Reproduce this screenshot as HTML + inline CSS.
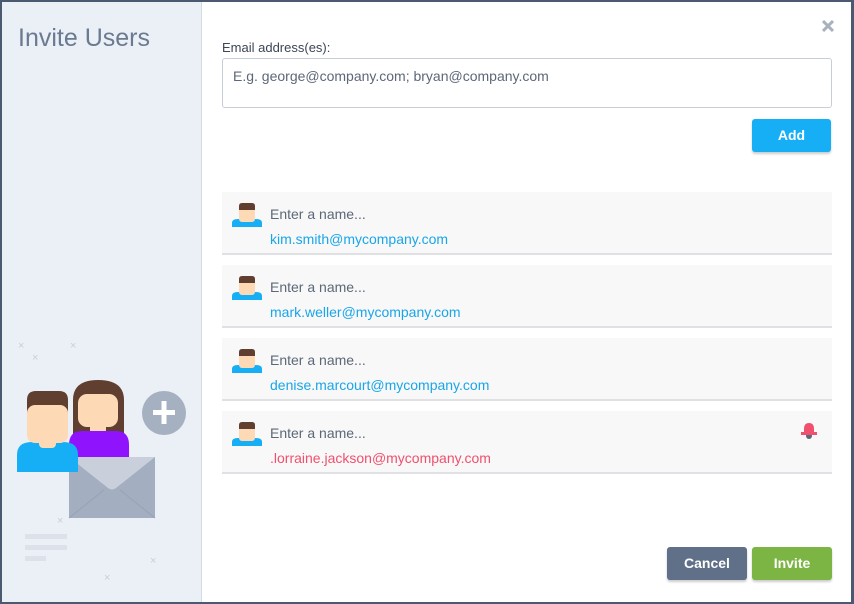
<!DOCTYPE html>
<html><head><style>
*{margin:0;padding:0;box-sizing:border-box}
body{width:854px;height:604px;background:#4b5a70;font-family:"Liberation Sans",sans-serif;position:relative;overflow:hidden}
#left{position:absolute;left:2px;top:2px;width:200px;height:600px;background:#ebeff6;border-right:1px solid #d5dbe5}
#right{position:absolute;left:202px;top:2px;width:649px;height:600px;background:#fff}
h1{position:absolute;left:16px;top:22px;font-weight:normal;font-size:25px;color:#6a7a90}
.lbl{position:absolute;left:20px;top:38px;font-size:13px;color:#3c4656}
.inp{position:absolute;left:20px;top:56px;width:610px;height:50px;border:1px solid #c8ced7;border-radius:3px;font-size:14px;color:#5c6878;padding:9px 10px}
.btn{position:absolute;border-radius:3px;color:#fff;font-weight:bold;font-size:14px;text-align:center;box-shadow:0 2px 2px rgba(0,0,0,.2)}
.row{position:absolute;left:20px;width:610px;height:63px;background:#f8f8f8;border-bottom:2px solid #dfe1e4}
.row .n{position:absolute;left:48px;top:14px;font-size:14px;color:#5c6878}
.row .e{position:absolute;left:48px;top:39px;font-size:14px;color:#19a6e8}
.av{position:absolute;left:10px;top:10px}
.x{position:absolute;color:#c8cfda;font-size:11px}
</style></head><body>
<div id="left">
<h1>Invite Users</h1>
<span class="x" style="left:16px;top:338px">×</span><span class="x" style="left:68px;top:338px">×</span><span class="x" style="left:30px;top:350px">×</span>
<span class="x" style="left:55px;top:513px">×</span><span class="x" style="left:148px;top:553px">×</span><span class="x" style="left:102px;top:570px">×</span>
<div style="position:absolute;left:23px;top:532px;width:42px;height:5px;background:#dde2ea"></div>
<div style="position:absolute;left:23px;top:543px;width:42px;height:5px;background:#dde2ea"></div>
<div style="position:absolute;left:23px;top:554px;width:21px;height:5px;background:#dde2ea"></div>
<svg style="position:absolute;left:-2px;top:-2px" width="200" height="604">
<circle cx="164" cy="413" r="22" fill="#a5b0c0"/><rect x="153" y="410" width="22" height="5" fill="#fff"/><rect x="161.5" y="401" width="5" height="23" fill="#fff"/>
<path d="M73 440 V400 Q73 380 98 380 Q124 380 124 400 V440Z" fill="#603f30"/>
<rect x="78" y="394" width="40" height="33" rx="9" fill="#fdd9b6"/>
<rect x="90" y="420" width="16" height="14" rx="4" fill="#fdd9b6"/>
<path d="M69 462 V445 Q69 431 82 431 H116 Q129 431 129 445 V462Z" fill="#9013fe"/>
<rect x="69" y="457" width="86" height="61" fill="#a3aec0"/>
<path d="M69 457 H155 L116 488 Q112 491 108 488Z" fill="#c9d0db"/>
<path d="M69 518 L104 490 M155 518 L120 490" stroke="#97a3b5" stroke-width="1"/>
<path d="M17 472 V455 Q17 442 32 442 H63 Q78 442 78 455 V472Z" fill="#16aef5"/>
<path d="M27 415 V400 Q27 391 36 391 H59 Q68 391 68 400 V415Z" fill="#603f30"/>
<rect x="27" y="405" width="41" height="38" rx="8" fill="#fdd9b6"/>
<rect x="39" y="438" width="17" height="10" rx="4" fill="#fdd9b6"/>
</svg>
</div>
<div id="right">
<svg style="position:absolute;left:620px;top:18px" width="12" height="12"><path d="M1 1L11 11M11 1L1 11" stroke="#a9b1bf" stroke-width="3"/></svg>
<div class="lbl">Email address(es):</div>
<div class="inp">E.g. george@company.com; bryan@company.com</div>
<div class="btn" style="left:550px;top:117px;width:79px;height:33px;line-height:33px;background:#16aef5">Add</div>
<div class="row" style="top:190px"><svg class="av" width="30" height="25"><path d="M0 25V21Q0 17 6 17H24Q30 17 30 21V25Z" fill="#16aef5"/><rect x="7" y="2" width="16" height="18" rx="3" fill="#fdd9b6"/><path d="M7 8V4Q7 1 10 1H20Q23 1 23 4V8Z" fill="#603f30"/></svg><div class="n">Enter a name...</div><div class="e">kim.smith@mycompany.com</div></div>
<div class="row" style="top:263px"><svg class="av" width="30" height="25"><path d="M0 25V21Q0 17 6 17H24Q30 17 30 21V25Z" fill="#16aef5"/><rect x="7" y="2" width="16" height="18" rx="3" fill="#fdd9b6"/><path d="M7 8V4Q7 1 10 1H20Q23 1 23 4V8Z" fill="#603f30"/></svg><div class="n">Enter a name...</div><div class="e">mark.weller@mycompany.com</div></div>
<div class="row" style="top:336px"><svg class="av" width="30" height="25"><path d="M0 25V21Q0 17 6 17H24Q30 17 30 21V25Z" fill="#16aef5"/><rect x="7" y="2" width="16" height="18" rx="3" fill="#fdd9b6"/><path d="M7 8V4Q7 1 10 1H20Q23 1 23 4V8Z" fill="#603f30"/></svg><div class="n">Enter a name...</div><div class="e">denise.marcourt@mycompany.com</div></div>
<div class="row" style="top:409px"><svg class="av" width="30" height="25"><path d="M0 25V21Q0 17 6 17H24Q30 17 30 21V25Z" fill="#16aef5"/><rect x="7" y="2" width="16" height="18" rx="3" fill="#fdd9b6"/><path d="M7 8V4Q7 1 10 1H20Q23 1 23 4V8Z" fill="#603f30"/></svg><div class="n">Enter a name...</div><div class="e" style="color:#f0506e">.lorraine.jackson@mycompany.com</div>
<svg style="position:absolute;left:578px;top:10px" width="18" height="20"><circle cx="9" cy="15" r="3" fill="#5c6878"/><path d="M4 14V8Q4 2 9 2Q14 2 14 8V14Z" fill="#f0506e"/><rect x="1" y="11" width="16" height="3" fill="#f0506e"/></svg></div>
<div class="btn" style="left:465px;top:545px;width:80px;height:33px;line-height:33px;background:#5f7088">Cancel</div>
<div class="btn" style="left:550px;top:545px;width:80px;height:33px;line-height:33px;background:#7cb543">Invite</div>
</div>
</body></html>
